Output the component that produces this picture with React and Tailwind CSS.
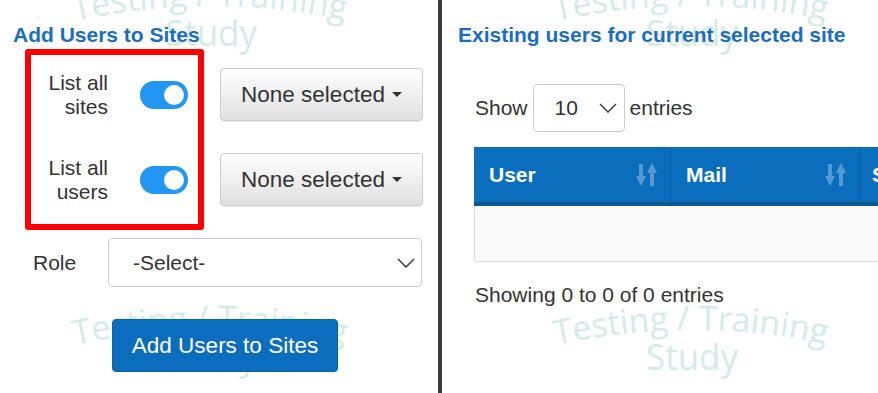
import React from "react";

function Watermark({ className }) {
  return (
    <svg className={className} width="300" height="100" viewBox="0 0 300 100">
      <defs>
        <path id="wm-arc" d="M 10 52 Q 147 22 284 52" fill="none" />
      </defs>
      <text fill="#d4ebe8" fontSize="34" fontFamily="Open Sans, sans-serif">
        <textPath href="#wm-arc" textLength="272" lengthAdjust="spacingAndGlyphs">
          Testing / Training
        </textPath>
      </text>
      <text
        x="146"
        y="77"
        textAnchor="middle"
        fill="#d4ebe8"
        fontSize="36"
        fontFamily="Open Sans, sans-serif"
        textLength="92"
        lengthAdjust="spacingAndGlyphs"
      >
        Study
      </text>
    </svg>
  );
}

function Toggle() {
  return (
    <div className="w-[48px] h-[28px] rounded-full bg-[#2196f3] flex items-center justify-end pr-[4px]">
      <div className="w-[20px] h-[20px] rounded-full bg-white" />
    </div>
  );
}

function Chevron({ className }) {
  return (
    <svg className={className} width="18" height="10" viewBox="0 0 18 10">
      <polyline points="1,1 9,9 17,1" fill="none" stroke="#444" strokeWidth="1.6" />
    </svg>
  );
}

function SortIcon() {
  return (
    <svg width="21" height="24" viewBox="0 0 21 24" className="opacity-30">
      <rect x="3" y="1" width="4" height="14" fill="#fff" />
      <polygon points="0,13 10,13 5,23" fill="#fff" />
      <polygon points="11,10 21,10 16,0" fill="#fff" />
      <rect x="14" y="8" width="4" height="15" fill="#fff" />
    </svg>
  );
}

function NoneSelected() {
  return (
    <button className="w-[203px] h-[53px] rounded-[4px] border border-[#ccc] bg-gradient-to-b from-white to-[#e0e0e0] shadow-[0_1px_1px_rgba(0,0,0,0.075)] flex items-center justify-center gap-[7px] text-[22.5px] text-[#333]">
      <span>None selected</span>
      <span className="w-0 h-0 border-x-[5px] border-t-[5px] border-x-transparent border-t-[#333]" />
    </button>
  );
}

export default function App() {
  const switches = ["sites", "users"];

  return (
    <div className="relative w-[878px] h-[393px] overflow-hidden bg-white flex font-['Liberation_Sans',Arial,sans-serif] text-[#333]">
      {/* watermark tiles */}
      <div className="absolute inset-0 pointer-events-none z-0">
        <Watermark className="absolute left-[65px] top-[-31px]" />
        <Watermark className="absolute left-[546px] top-[-31px]" />
        <Watermark className="absolute left-[65px] top-[293px]" />
        <Watermark className="absolute left-[546px] top-[293px]" />
      </div>

      {/* left panel */}
      <div className="relative z-10 w-[438px] shrink-0 pl-[13px] pt-[24px]">
        <h2 className="text-[21px] font-bold leading-[22px] text-[#1a6ebd]">Add Users to Sites</h2>

        <div className="flex items-start mt-[3px] ml-[12px]">
          <div className="w-[179px] h-[181px] border-[6px] border-[#ff0000] rounded-[3px] pt-[13px] flex flex-col gap-[32px]">
            {switches.map((s) => (
              <div key={s} className="h-[53px] flex items-center">
                <div className="w-[77px] text-right text-[21px] leading-[24px]">
                  List all
                  <br />
                  {s}
                </div>
                <div className="ml-[32px]">
                  <Toggle />
                </div>
              </div>
            ))}
          </div>
          <div className="ml-[16px] mt-[19px] flex flex-col gap-[32px]">
            <NoneSelected />
            <NoneSelected />
          </div>
        </div>

        <div className="flex items-center mt-[8px]">
          <span className="ml-[20px] w-[75px] text-[21px]">Role</span>
          <div className="w-[314px] h-[49px] rounded-[4px] border border-[#ccc] bg-white flex items-center justify-between pl-[24px] pr-[6px] text-[21px]">
            <span>-Select-</span>
            <Chevron />
          </div>
        </div>

        <button className="mt-[32px] ml-[99px] w-[226px] h-[53px] rounded-[4px] bg-[#0b6dbd] border border-[#0a62ab] text-white text-[22.5px]">
          Add Users to Sites
        </button>
      </div>

      {/* divider */}
      <div className="relative z-10 w-[4px] shrink-0 bg-[#3a3a3a]" />

      {/* right panel */}
      <div className="relative z-10 flex-1 pl-[16px] pt-[24px] overflow-hidden">
        <h2 className="text-[21px] font-bold leading-[22px] text-[#1a6ebd] whitespace-nowrap">
          Existing users for current selected site
        </h2>

        <div className="flex items-center mt-[38px] pl-[17px] text-[21px]">
          <span>Show</span>
          <div className="ml-[5px] w-[92px] h-[48px] rounded-[4px] border border-[#ccc] bg-white flex items-center pl-[21px] pr-[7px] justify-between">
            <span>10</span>
            <Chevron />
          </div>
          <span className="ml-[5px]">entries</span>
        </div>

        <div className="mt-[15px] ml-[16px] w-[600px]">
          <div className="flex h-[59px] bg-[#0a6ebd] border-b-[4px] border-[#0b5896] text-white text-[21px] font-bold">
            <div className="w-[197px] shrink-0 flex items-center justify-between pl-[15px] pr-[13px] border-r border-[#0b5fa3]">
              <span>User</span>
              <SortIcon />
            </div>
            <div className="w-[189px] shrink-0 flex items-center justify-between pl-[15px] pr-[13px] border-r border-[#0b5fa3]">
              <span>Mail</span>
              <SortIcon />
            </div>
            <div className="flex-1 flex items-center pl-[12px]">
              <span>Site</span>
            </div>
          </div>
          <div className="h-[56px] bg-[#f9f9f9] border-l border-b border-[#ddd]" />
        </div>

        <div className="mt-[21px] pl-[17px] text-[21px] leading-[24px]">Showing 0 to 0 of 0 entries</div>
      </div>
    </div>
  );
}
